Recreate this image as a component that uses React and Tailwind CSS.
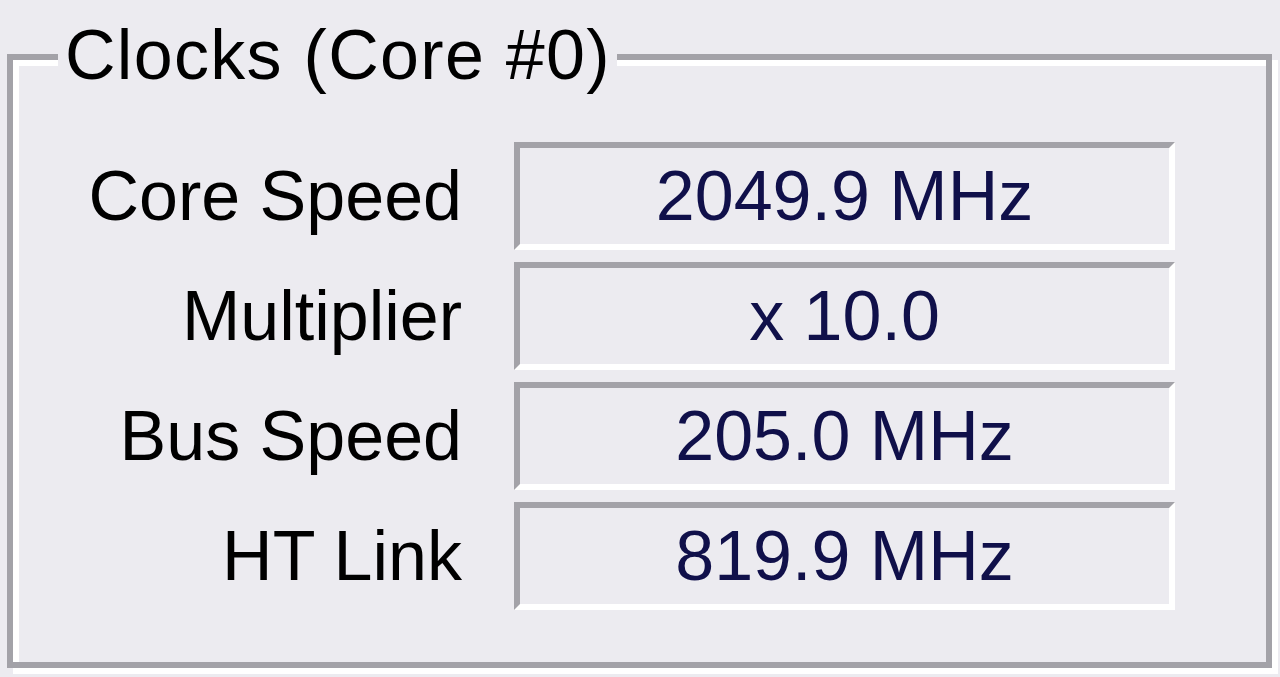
import React from "react";

const rows = [
  { label: "Core Speed", value: "2049.9 MHz" },
  { label: "Multiplier", value: "x 10.0" },
  { label: "Bus Speed", value: "205.0 MHz" },
  { label: "HT Link", value: "819.9 MHz" },
];

export default function App() {
  return (
    <div
      className="w-[1280px] h-[677px] bg-[#ecebf0] pt-[54px] pl-[7px] overflow-hidden"
      style={{ fontFamily: '"Liberation Sans", Arial, sans-serif' }}
    >
      {/* etched group box */}
      <div className="relative w-[1265px] h-[614px] border-[6px] border-[#a3a2a8] shadow-[6px_6px_0_0_#ffffff,inset_6px_6px_0_0_#ffffff]">
        <span className="absolute left-[45px] top-[-40px] bg-[#ecebf0] pl-[7px] pr-[6px] text-[70px] leading-none tracking-[1.3px] text-black">
          Clocks (Core #0)
        </span>

        <div className="pt-[82px] grid grid-cols-[449px_661px] gap-x-[52px] gap-y-[12px]">
          {rows.map((r) => (
            <React.Fragment key={r.label}>
              <div className="h-[108px] flex items-center justify-end text-[70px] leading-none text-black">
                {r.label}
              </div>
              <div className="h-[108px] flex items-center justify-center border-[6px] border-t-[#a3a2a8] border-l-[#a3a2a8] border-b-white border-r-white text-[70px] leading-none text-[#10104a]">
                {r.value}
              </div>
            </React.Fragment>
          ))}
        </div>
      </div>
    </div>
  );
}
